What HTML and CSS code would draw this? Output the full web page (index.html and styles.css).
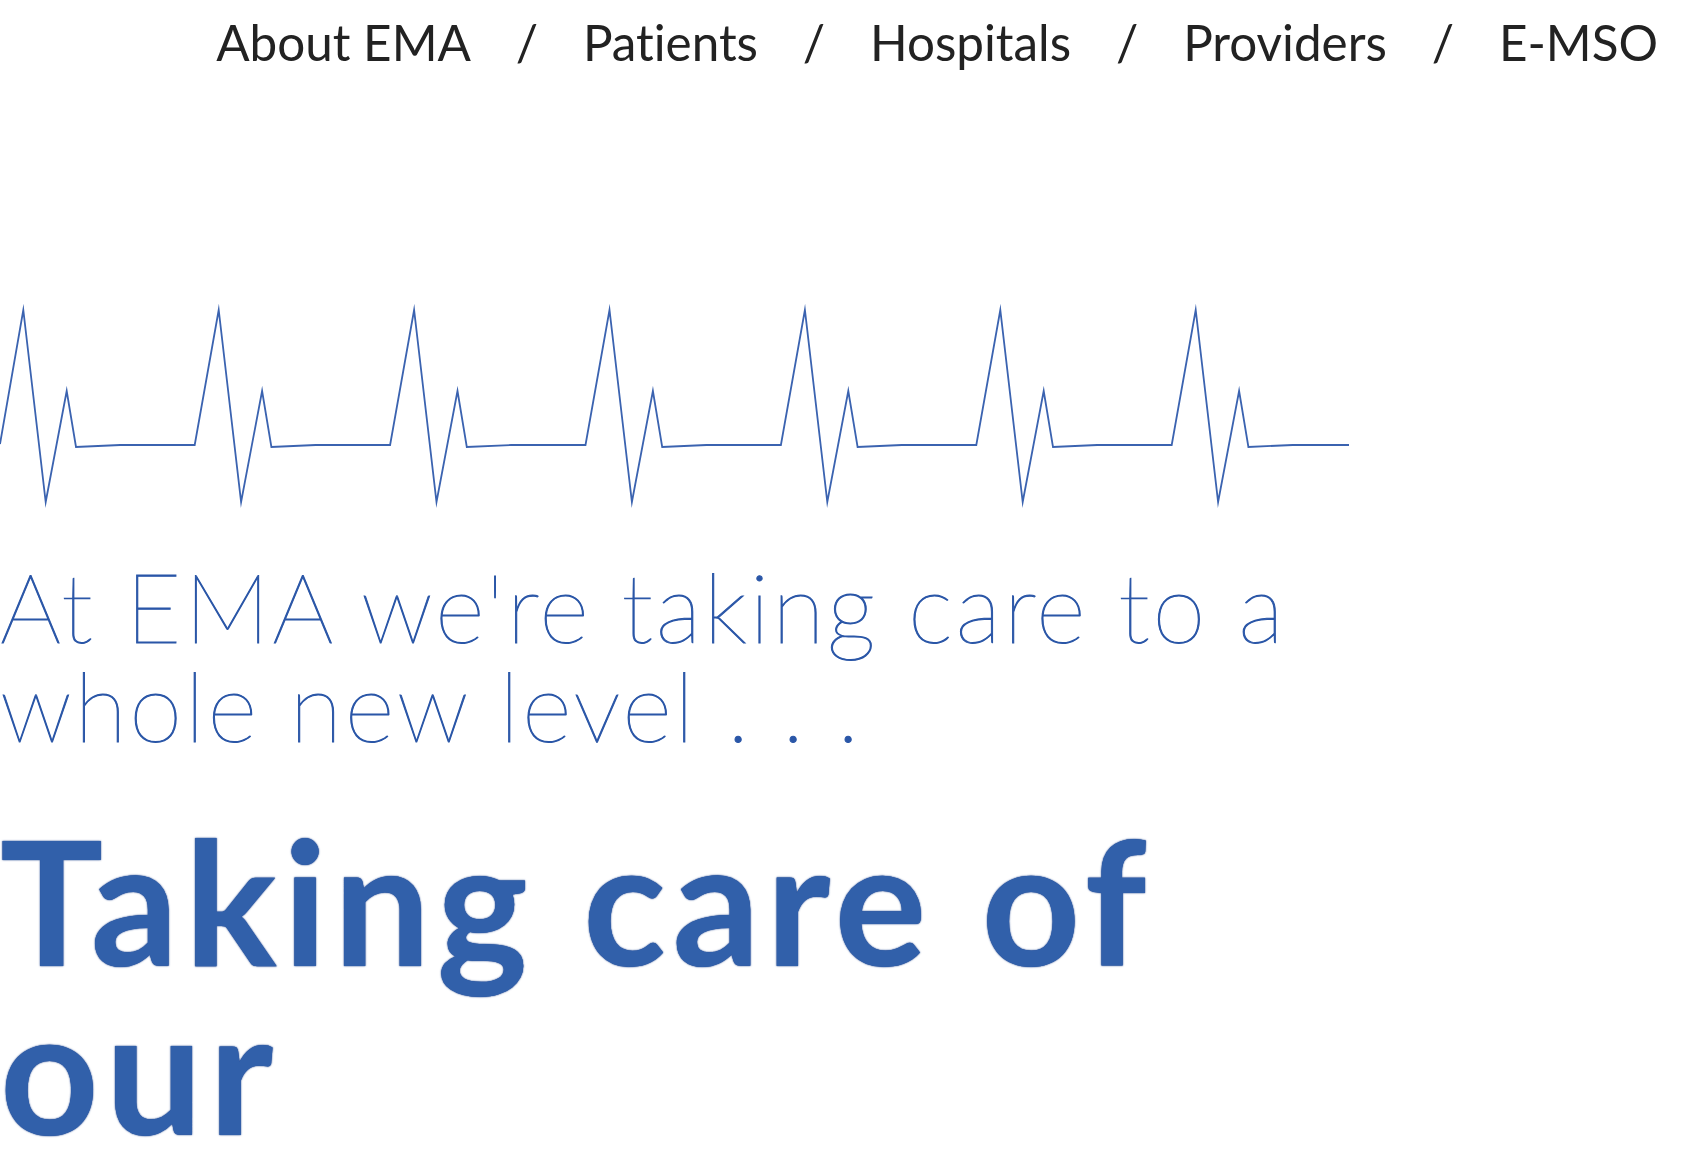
FILE: index.html
```html
<!DOCTYPE html>
<html lang="en">
<head>
<meta charset="utf-8">
<title>EMA</title>
<link rel="stylesheet" href="styles.css">
</head>
<body>
<header class="site-header">
  <nav class="main-nav">
    <ul class="nav-list">
      <li class="nav-item"><a class="nav-link" href="#">About EMA</a></li>
      <li class="nav-item"><a class="nav-link" href="#">Patients</a></li>
      <li class="nav-item"><a class="nav-link" href="#">Hospitals</a></li>
      <li class="nav-item"><a class="nav-link" href="#">Providers</a></li>
      <li class="nav-item"><a class="nav-link" href="#">E-MSO</a></li>
    </ul>
  </nav>
</header>
<main class="hero">
  <svg class="ecg" viewBox="0 0 1350 210" aria-hidden="true">
    <polyline fill="none" stroke="#3b63b0" stroke-width="1.8" stroke-linejoin="miter" stroke-miterlimit="10"
      points="0,142 23.3,8 45.7,200 66.7,89 76,145 120.3,143 194.7,143
              218.7,8 241.1,200 262.1,89 271.4,145 315.7,143 390.1,143
              414.1,8 436.5,200 457.5,89 466.8,145 511.1,143 585.5,143
              609.5,8 631.9,200 652.9,89 662.2,145 706.5,143 780.9,143
              804.9,8 827.3,200 848.3,89 857.6,145 901.9,143 976.3,143
              1000.3,8 1022.7,200 1043.7,89 1053,145 1097.3,143 1171.7,143
              1195.7,8 1218.1,200 1239.1,89 1248.4,145 1292.7,143 1349,143"/>
  </svg>
  <p class="lead">At EMA we're taking care to a whole new level . . .</p>
  <h1 class="title">Taking care of our</h1>
</main>
</body>
</html>
```

FILE: styles.css
```css
html, body {
  margin: 0;
  padding: 0;
  background: #ffffff;
}

body {
  font-family: Lato, "Open Sans", "Liberation Sans", sans-serif;
  color: #222222;
  font-variant-ligatures: none;
}

.site-header {
  padding: 12px 32px 0 0;
}

.nav-list {
  list-style: none;
  margin: 0;
  padding: 0;
  display: flex;
  justify-content: flex-end;
  font-size: 49.4px;
  line-height: 60px;
  font-weight: 400;
}

.nav-item {
  display: flex;
}

.nav-item + .nav-item::before {
  content: "/";
  display: inline-block;
  width: 112px;
  text-align: center;
  color: #222222;
}

.nav-link {
  color: #222222;
  text-decoration: none;
}

.hero {
  width: 1350px;
}

.ecg {
  display: block;
  width: 1350px;
  height: 210px;
  margin-top: 230px;
}

.lead {
  margin: 44px 0 0 0;
  font-size: 96px;
  line-height: 99px;
  font-weight: 200;
  letter-spacing: 2.7px;
  color: #2a56a7;
  -webkit-text-stroke: 1px #2a56a7;
}

.title {
  margin: 61px 0 0 0;
  font-size: 172px;
  line-height: 169px;
  font-weight: 700;
  letter-spacing: 6.6px;
  color: #3160aa;
  text-shadow: 0 0 1px #1b418c, 0 0 2px rgba(27, 65, 140, 0.8);
}
```
